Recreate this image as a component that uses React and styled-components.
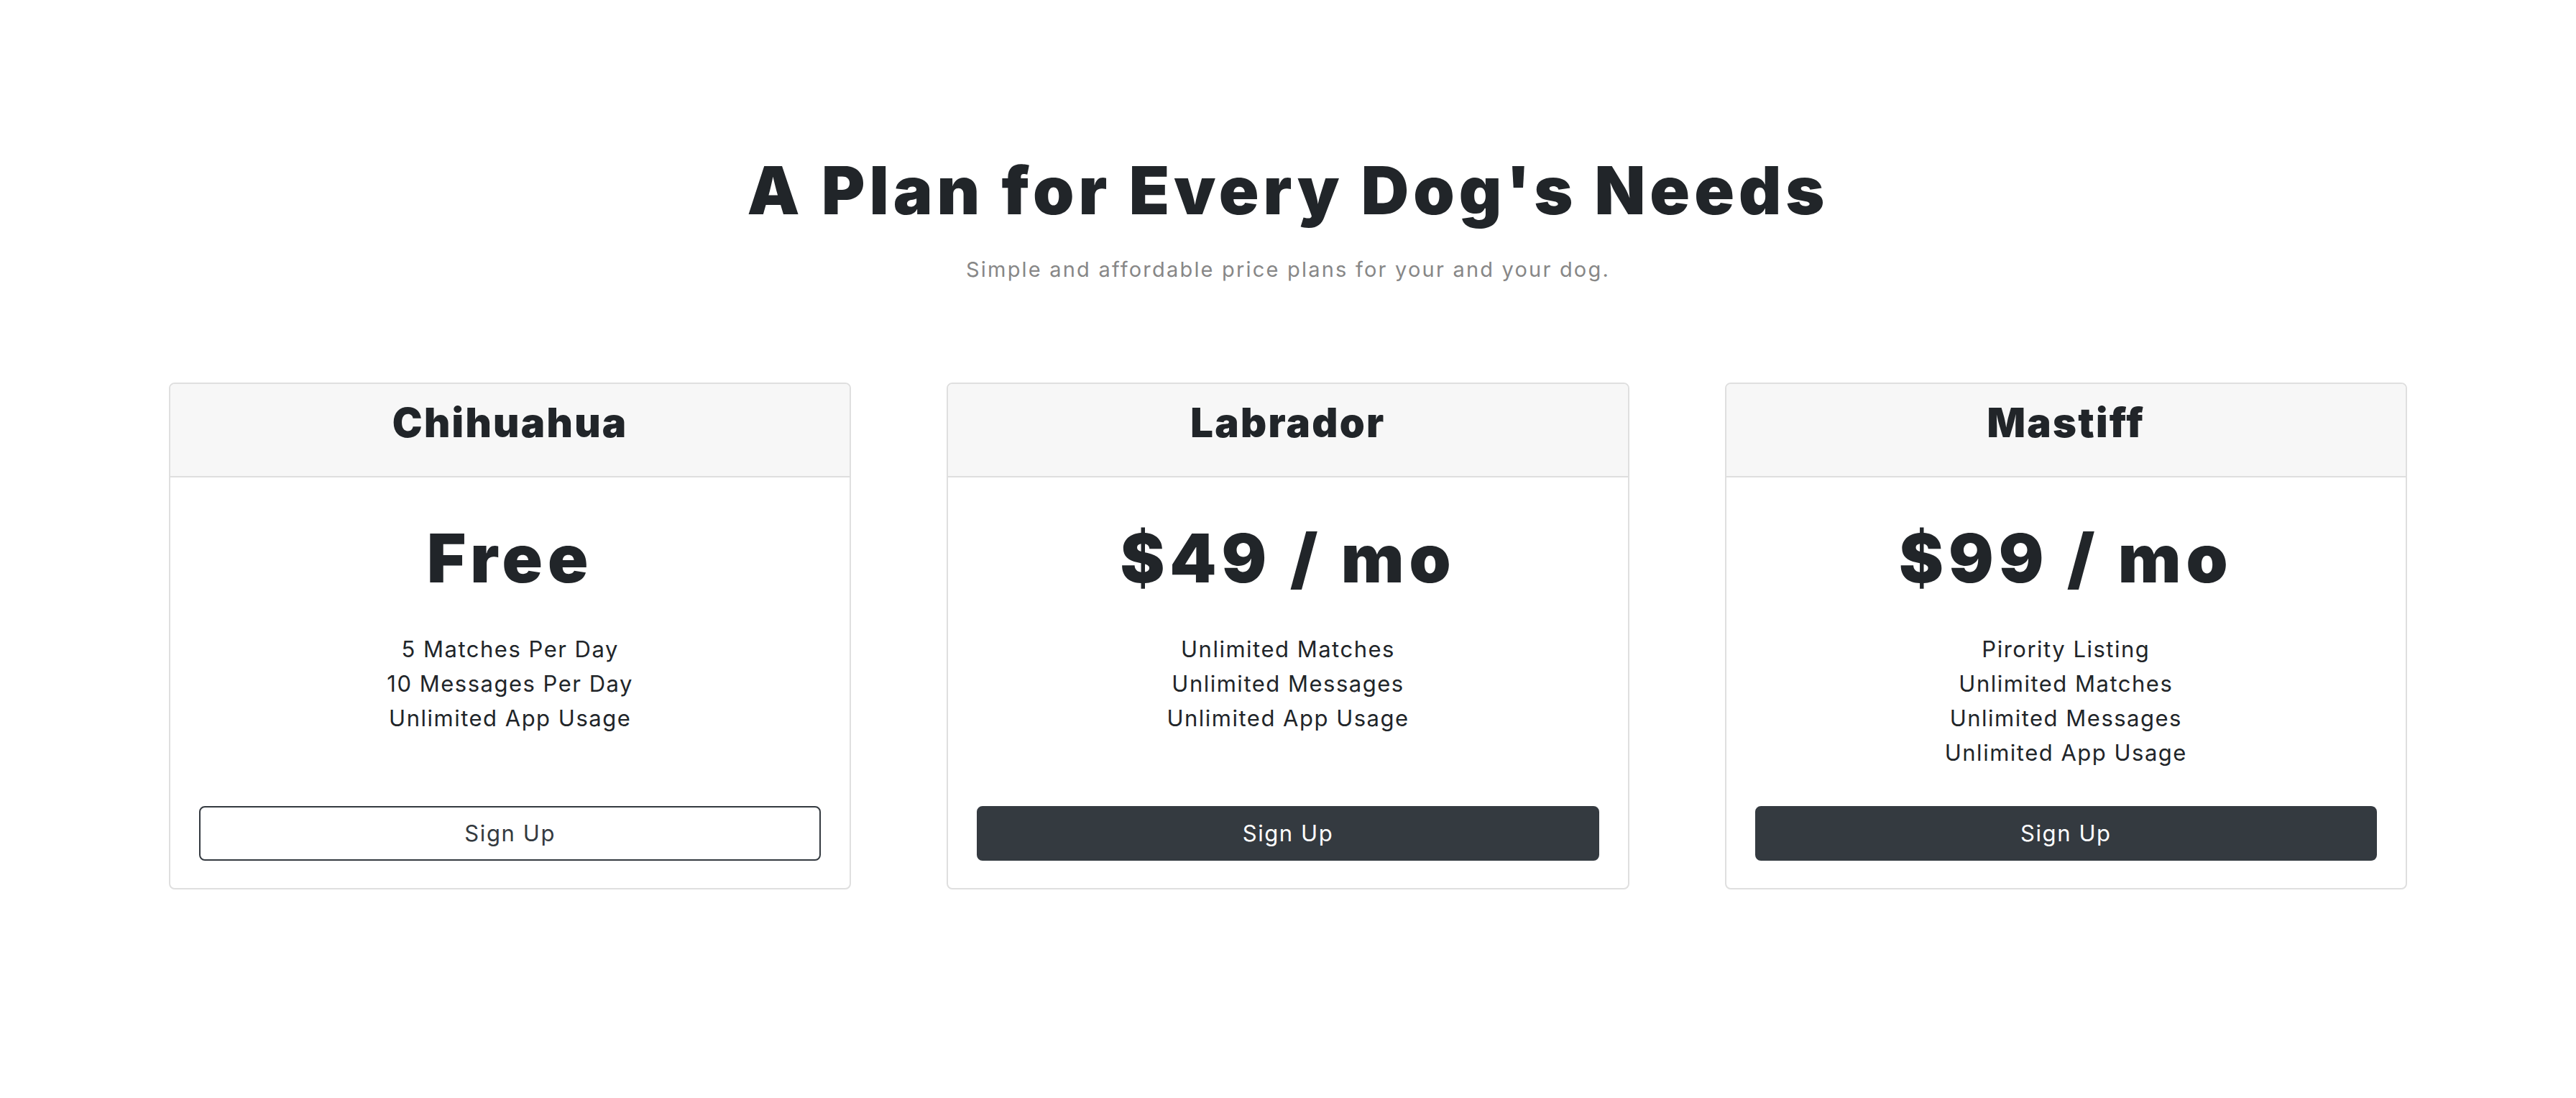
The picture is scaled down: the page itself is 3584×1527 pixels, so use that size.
import React from 'react'
import styled, { createGlobalStyle } from 'styled-components'

const GlobalStyle = createGlobalStyle`
  body {
    margin: 0;
    background: #ffffff;
    color: #212529;
    font-family: Inter, "Open Sans", "Liberation Sans", sans-serif;
  }
`

const plans = [
  {
    name: 'Chihuahua',
    price: 'Free',
    features: ['5 Matches Per Day', '10 Messages Per Day', 'Unlimited App Usage'],
    variant: 'outline'
  },
  {
    name: 'Labrador',
    price: '$49 / mo',
    features: ['Unlimited Matches', 'Unlimited Messages', 'Unlimited App Usage'],
    variant: 'dark'
  },
  {
    name: 'Mastiff',
    price: '$99 / mo',
    features: ['Pirority Listing', 'Unlimited Matches', 'Unlimited Messages', 'Unlimited App Usage'],
    variant: 'dark'
  }
]

const App = () => {
  return (
    <>
      <GlobalStyle />
      <Section>
        <Title>A Plan for Every Dog's Needs</Title>
        <Subtitle>Simple and affordable price plans for your and your dog.</Subtitle>
        <Cards>
          {plans.map((plan, i) => {
            return (
              <Card key={i}>
                <CardHeader>
                  <PlanName>{plan.name}</PlanName>
                </CardHeader>
                <CardBody>
                  <Price>{plan.price}</Price>
                  <Features>
                    {plan.features.map((f, j) => (
                      <Feature key={j}>{f}</Feature>
                    ))}
                  </Features>
                  <SignUp variant={plan.variant}>Sign Up</SignUp>
                </CardBody>
              </Card>
            )
          })}
        </Cards>
      </Section>
    </>
  )
}

export default App

const Section = styled.section`
  padding: 210px 0 280px;
  text-align: center;
`

const Title = styled.h1`
  margin: 0;
  font-size: 92px;
  line-height: 1.2;
  font-weight: 900;
  letter-spacing: 6px;
  color: #212529;
`

const Subtitle = styled.p`
  margin: 33px 0 0;
  font-size: 29px;
  line-height: 1.5;
  font-weight: 400;
  letter-spacing: 2.2px;
  color: #878787;
`

const Cards = styled.div`
  display: grid;
  grid-template-columns: repeat(3, 1fr);
  gap: 133px;
  width: 3114px;
  margin: 135px auto 0;
`

const Card = styled.div`
  display: flex;
  flex-direction: column;
  border: 2px solid #dfdfdf;
  border-radius: 8px;
  background: #fff;
  overflow: hidden;
`

const CardHeader = styled.div`
  background: #f7f7f7;
  border-bottom: 2px solid #dfdfdf;
  padding: 21px 40px 40px;
`

const PlanName = styled.h3`
  margin: 0;
  font-size: 56px;
  line-height: 1.2;
  font-weight: 900;
  letter-spacing: 2.3px;
  color: #212529;
`

const CardBody = styled.div`
  flex: 1;
  display: flex;
  flex-direction: column;
  padding: 57px 40px 38px;
`

const Price = styled.div`
  font-size: 93px;
  line-height: 1.2;
  font-weight: 900;
  letter-spacing: 7px;
  color: #212529;
`

const Features = styled.ul`
  list-style: none;
  padding: 0;
  margin: 46px 0 50px;
`

const Feature = styled.li`
  font-size: 31px;
  line-height: 48px;
  letter-spacing: 1.5px;
  color: #212529;
`

const SignUp = styled.button`
  margin-top: auto;
  display: block;
  width: 100%;
  padding: 12px 24px;
  font-family: Inter, "Open Sans", "Liberation Sans", sans-serif;
  font-size: 31px;
  line-height: 48px;
  font-weight: 400;
  letter-spacing: 1.6px;
  border-radius: 8px;
  border: 2px solid #343a40;
  background: ${props => props.variant === 'dark' ? '#343a40' : '#ffffff'};
  color: ${props => props.variant === 'dark' ? '#ffffff' : '#343a40'};
  cursor: pointer;
`
